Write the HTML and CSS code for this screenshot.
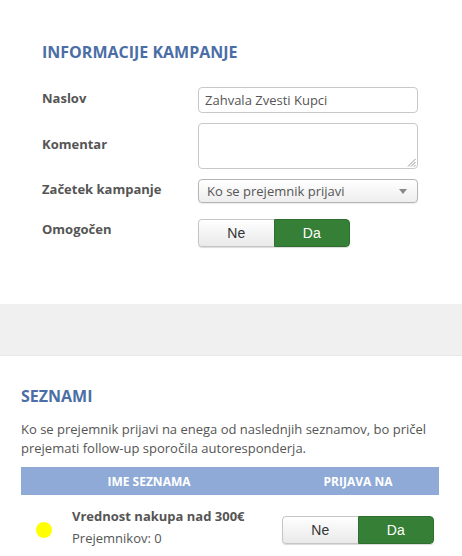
FILE: index.html
```html
<!DOCTYPE html>
<html>
<head>
<meta charset="utf-8">
<link rel="stylesheet" href="styles.css">
</head>
<body>
<section class="info">
  <h2 class="title">INFORMACIJE KAMPANJE</h2>
  <div class="form">
    <label class="lbl">Naslov</label>
    <div class="field"><div class="input">Zahvala Zvesti Kupci</div></div>
    <label class="lbl">Komentar</label>
    <div class="field"><div class="textarea"><svg class="grip" width="9" height="9" viewBox="0 0 9 9"><path d="M8.5 1 L1 8.5 M8.5 4 L4 8.5 M8.5 7 L7 8.5" stroke="#888" stroke-width="0.9"/></svg></div></div>
    <label class="lbl">Začetek kampanje</label>
    <div class="field"><div class="select"><span>Ko se prejemnik prijavi</span><span class="caret"></span></div></div>
    <label class="lbl lbl-toggle">Omogočen</label>
    <div class="field field-toggle"><div class="toggle"><span class="opt">Ne</span><span class="opt on">Da</span></div></div>
  </div>
</section>
<div class="band"></div>
<section class="lists">
  <h2 class="title">SEZNAMI</h2>
  <p class="desc">Ko se prejemnik prijavi na enega od naslednjih seznamov, bo pričel prejemati follow-up sporočila autoresponderja.</p>
  <div class="table">
    <div class="thead">
      <div class="th th-name">IME SEZNAMA</div>
      <div class="th th-sub">PRIJAVA NA</div>
    </div>
    <div class="row">
      <div class="dotcell"><span class="dot"></span></div>
      <div class="namecell">
        <div class="lname">Vrednost nakupa nad 300€</div>
        <div class="lcount">Prejemnikov: 0</div>
      </div>
      <div class="subcell"><div class="toggle"><span class="opt">Ne</span><span class="opt on">Da</span></div></div>
    </div>
  </div>
</section>
</body>
</html>
```
FILE: styles.css
```css
* { box-sizing: border-box; }
html, body { margin: 0; padding: 0; background: #fff; }
body {
  font-family: "Open Sans", "DejaVu Sans", sans-serif;
  font-size: 13px;
  color: #555;
  width: 462px;
}
.title {
  margin: 0;
  font-size: 16px;
  font-weight: 700;
  color: #4b6ea6;
  line-height: 22px;
}
.info { padding: 41px 0 57px 42px; }
.form {
  margin-top: 24px;
  display: grid;
  grid-template-columns: 156px 220px;
  row-gap: 10px;
  align-items: center;
}
.lbl {
  font-weight: 700;
  font-size: 13px;
  color: #555;
  padding-bottom: 4px;
}
.lbl-toggle { padding-bottom: 9px; margin-top: 6px; }
.field-toggle { margin-top: 6px; }
.input, .textarea, .select {
  width: 220px;
  border: 1px solid #c8c8c8;
  border-radius: 4px;
  background: #fff;
}
.input {
  height: 26px;
  padding: 0 6px;
  line-height: 24px;
  font-size: 13px;
  color: #555;
}
.textarea { height: 46px; position: relative; }
.grip { position: absolute; right: 1px; bottom: 1px; }
.select {
  height: 24px;
  padding: 0 8px;
  display: flex;
  align-items: center;
  justify-content: space-between;
  background: linear-gradient(#fff, #eeeeee);
  border-color: #b5b5b5;
  box-shadow: 0 1px 1px rgba(0,0,0,0.08);
  font-size: 13px;
  color: #555;
}
.caret {
  width: 0; height: 0;
  border-left: 4px solid transparent;
  border-right: 4px solid transparent;
  border-top: 5px solid #888;
  margin-right: 2px;
}
.toggle {
  display: flex;
  width: 152px;
  height: 28px;
  border-radius: 4px;
  overflow: hidden;
  box-shadow: 0 1px 1px rgba(0,0,0,0.15);
}
.opt {
  flex: 1;
  display: flex;
  align-items: center;
  justify-content: center;
  font-family: "Liberation Sans", Arial, sans-serif;
  font-size: 14px;
  color: #333;
  background: linear-gradient(#fff, #e9e9e9);
  border: 1px solid #c5c5c5;
  border-right: none;
  border-radius: 4px 0 0 4px;
}
.opt.on {
  background: #367f36;
  color: #fff;
  border: 1px solid #2e6e2e;
  border-radius: 0 4px 4px 0;
}
.band { height: 52px; background: #f0f0f0; border-bottom: 1px solid #e8e8e8; }
.lists { padding: 29px 23px 0 21px; }
.desc { margin: 13px 0 0; line-height: 19px; font-size: 13px; color: #555; }
.table { margin-top: 9px; }
.thead {
  display: flex;
  height: 28px;
  background: #8faad6;
  color: #fff;
  font-weight: 700;
  font-size: 12px;
  align-items: center;
}
.th { text-align: center; }
.th-name { width: 256px; }
.th-sub { flex: 1; }
.row { display: flex; align-items: center; padding-top: 11px; }
.dotcell { width: 51px; display: flex; justify-content: center; padding-right: 5px; padding-top: 6px; }
.dot { width: 16px; height: 16px; border-radius: 50%; background: #ffff00; }
.namecell { width: 205px; }
.lname { font-weight: 700; font-size: 13px; color: #555; line-height: 20px; }
.lcount { font-size: 13px; color: #555; line-height: 20px; margin-top: 2px; }
.subcell { flex: 1; display: flex; justify-content: center; padding-top: 6px; }
```
